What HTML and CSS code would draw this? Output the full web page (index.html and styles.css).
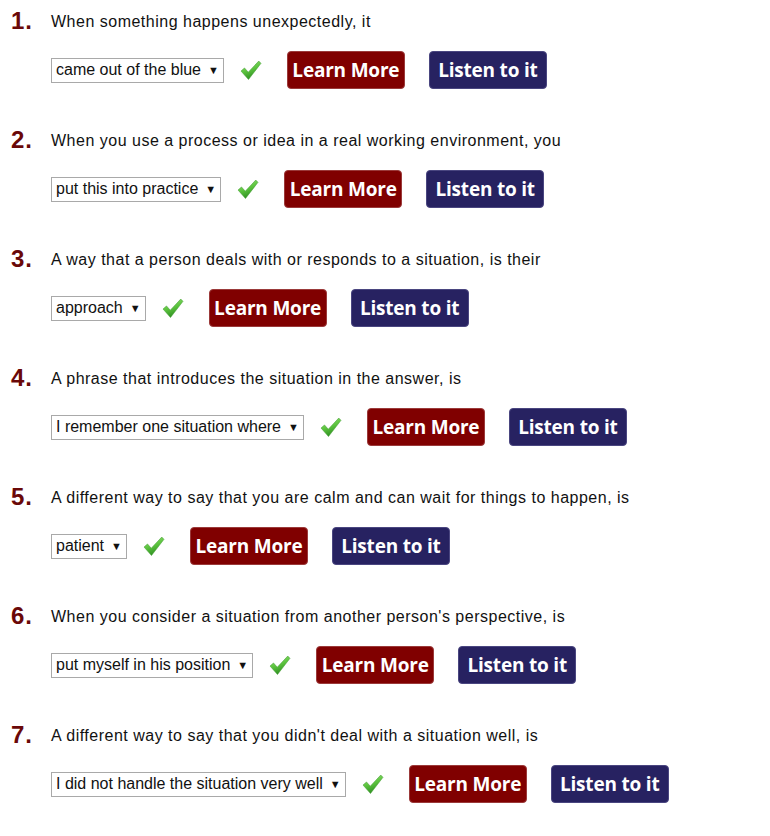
FILE: index.html
```html
<!DOCTYPE html>
<html>
<head>
<meta charset="utf-8">
<link rel="stylesheet" href="styles.css">
</head>
<body>
<svg class="defs" width="0" height="0" aria-hidden="true"><defs><linearGradient id="g1" x1="0" y1="0" x2="0.4" y2="1"><stop offset="0" stop-color="#9ee27c"/><stop offset="0.55" stop-color="#5cc43e"/><stop offset="1" stop-color="#2f8f22"/></linearGradient></defs></svg>
<div class="quiz">

  <div class="item">
    <div class="num">1.</div>
    <div class="body">
      <p class="q">When something happens unexpectedly, it</p>
      <div class="controls">
        <span class="select">came out of the blue<span class="arrow">▼</span></span>
        <svg class="check" viewBox="0 0 20 20"><path d="M0.5 10.5 L3.8 7.6 L7.4 11.6 L17.4 1 L19.5 3.2 L7.6 18.6 Z" fill="url(#g1)" stroke="#3c9a2c" stroke-width="0.5" stroke-linejoin="round"/></svg>
        <span class="btn learn">Learn More</span>
        <span class="btn listen">Listen to it</span>
      </div>
    </div>
  </div>

  <div class="item">
    <div class="num">2.</div>
    <div class="body">
      <p class="q">When you use a process or idea in a real working environment, you</p>
      <div class="controls">
        <span class="select">put this into practice<span class="arrow">▼</span></span>
        <svg class="check" viewBox="0 0 20 20"><path d="M0.5 10.5 L3.8 7.6 L7.4 11.6 L17.4 1 L19.5 3.2 L7.6 18.6 Z" fill="url(#g1)" stroke="#3c9a2c" stroke-width="0.5" stroke-linejoin="round"/></svg>
        <span class="btn learn">Learn More</span>
        <span class="btn listen">Listen to it</span>
      </div>
    </div>
  </div>

  <div class="item">
    <div class="num">3.</div>
    <div class="body">
      <p class="q">A way that a person deals with or responds to a situation, is their</p>
      <div class="controls">
        <span class="select">approach<span class="arrow">▼</span></span>
        <svg class="check" viewBox="0 0 20 20"><path d="M0.5 10.5 L3.8 7.6 L7.4 11.6 L17.4 1 L19.5 3.2 L7.6 18.6 Z" fill="url(#g1)" stroke="#3c9a2c" stroke-width="0.5" stroke-linejoin="round"/></svg>
        <span class="btn learn">Learn More</span>
        <span class="btn listen">Listen to it</span>
      </div>
    </div>
  </div>

  <div class="item">
    <div class="num">4.</div>
    <div class="body">
      <p class="q">A phrase that introduces the situation in the answer, is</p>
      <div class="controls">
        <span class="select">I remember one situation where<span class="arrow">▼</span></span>
        <svg class="check" viewBox="0 0 20 20"><path d="M0.5 10.5 L3.8 7.6 L7.4 11.6 L17.4 1 L19.5 3.2 L7.6 18.6 Z" fill="url(#g1)" stroke="#3c9a2c" stroke-width="0.5" stroke-linejoin="round"/></svg>
        <span class="btn learn">Learn More</span>
        <span class="btn listen">Listen to it</span>
      </div>
    </div>
  </div>

  <div class="item">
    <div class="num">5.</div>
    <div class="body">
      <p class="q">A different way to say that you are calm and can wait for things to happen, is</p>
      <div class="controls">
        <span class="select">patient<span class="arrow">▼</span></span>
        <svg class="check" viewBox="0 0 20 20"><path d="M0.5 10.5 L3.8 7.6 L7.4 11.6 L17.4 1 L19.5 3.2 L7.6 18.6 Z" fill="url(#g1)" stroke="#3c9a2c" stroke-width="0.5" stroke-linejoin="round"/></svg>
        <span class="btn learn">Learn More</span>
        <span class="btn listen">Listen to it</span>
      </div>
    </div>
  </div>

  <div class="item">
    <div class="num">6.</div>
    <div class="body">
      <p class="q">When you consider a situation from another person's perspective, is</p>
      <div class="controls">
        <span class="select">put myself in his position<span class="arrow">▼</span></span>
        <svg class="check" viewBox="0 0 20 20"><path d="M0.5 10.5 L3.8 7.6 L7.4 11.6 L17.4 1 L19.5 3.2 L7.6 18.6 Z" fill="url(#g1)" stroke="#3c9a2c" stroke-width="0.5" stroke-linejoin="round"/></svg>
        <span class="btn learn">Learn More</span>
        <span class="btn listen">Listen to it</span>
      </div>
    </div>
  </div>

  <div class="item">
    <div class="num">7.</div>
    <div class="body">
      <p class="q">A different way to say that you didn't deal with a situation well, is</p>
      <div class="controls">
        <span class="select">I did not handle the situation very well<span class="arrow">▼</span></span>
        <svg class="check" viewBox="0 0 20 20"><path d="M0.5 10.5 L3.8 7.6 L7.4 11.6 L17.4 1 L19.5 3.2 L7.6 18.6 Z" fill="url(#g1)" stroke="#3c9a2c" stroke-width="0.5" stroke-linejoin="round"/></svg>
        <span class="btn learn">Learn More</span>
        <span class="btn listen">Listen to it</span>
      </div>
    </div>
  </div>

</div>
</body>
</html>
```

FILE: styles.css
```css
html, body {
  margin: 0;
  padding: 0;
  background: #fff;
}

body {
  font-family: "Liberation Sans", Arial, sans-serif;
  color: #111;
}

.defs {
  position: absolute;
  width: 0;
  height: 0;
}

.quiz {
  padding-top: 8px;
}

.item {
  display: flex;
  margin-bottom: 38px;
}

.num {
  width: 40px;
  padding-left: 11px;
  font-size: 24px;
  font-weight: bold;
  letter-spacing: 1px;
  line-height: 26px;
  color: #6a0808;
}

.body {
  flex: 1;
}

.q {
  margin: 0 0 17px 0;
  padding-top: 2px;
  font-size: 16px;
  letter-spacing: 0.5px;
  line-height: 24px;
}

.controls {
  display: flex;
  align-items: center;
  height: 38px;
}

.select {
  display: inline-flex;
  align-items: center;
  height: 23px;
  border: 1px solid #a9a9a9;
  padding: 0 4px 0 4px;
  font-size: 16px;
  color: #111;
  background: #fff;
}

.arrow {
  font-size: 11px;
  margin-left: 7px;
}

.check {
  width: 22px;
  height: 21px;
  margin-left: 16px;
  margin-right: 25px;
}

.btn {
  display: inline-flex;
  align-items: center;
  justify-content: center;
  box-sizing: border-box;
  width: 118px;
  height: 38px;
  border-radius: 4px;
  color: #fff;
  font-family: "Open Sans", "Noto Sans", sans-serif;
  font-weight: 700;
  font-size: 19px;
  letter-spacing: -0.2px;
}

.learn {
  background: #800000;
  border: 1px solid #9b3a3a;
}

.listen {
  background: #272261;
  border: 1px solid #4a4680;
  margin-left: 24px;
}
```
